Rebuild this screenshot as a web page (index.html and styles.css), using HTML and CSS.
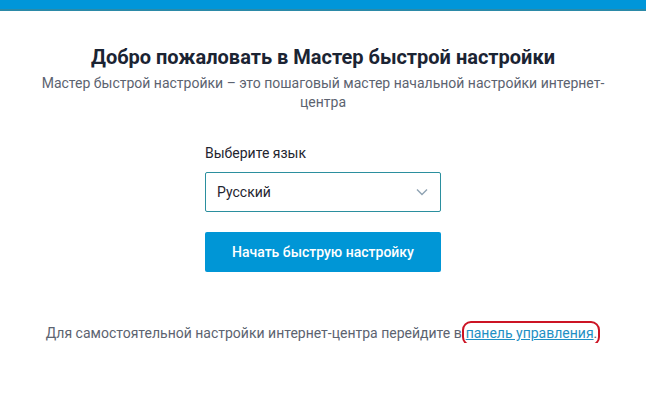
FILE: index.html
```html
<!DOCTYPE html>
<html lang="ru">
<head>
<meta charset="utf-8">
<title>Мастер быстрой настройки</title>
<link rel="stylesheet" href="styles.css">
</head>
<body>
<div class="topbar"></div>
<main class="wizard">
  <h1 class="title">Добро пожаловать в Мастер быстрой настройки</h1>
  <p class="subtitle">Мастер быстрой настройки – это пошаговый мастер начальной настройки интернет-центра</p>
  <div class="form">
    <label class="label">Выберите язык</label>
    <div class="select">
      <span>Русский</span>
      <svg class="chev" width="12" height="8" viewBox="0 0 12 8"><path d="M1 1.5 L6 6.5 L11 1.5" fill="none" stroke="#8fa3b3" stroke-width="1.4"/></svg>
    </div>
    <button class="start">Начать быструю настройку</button>
  </div>
  <p class="footer">Для самостоятельной настройки интернет-центра перейдите в<span class="mark"><a href="#" class="link">панель управления</a>.</span></p>
</main>
</body>
</html>
```
FILE: styles.css
```css
html, body {
  margin: 0;
  padding: 0;
  background: #fff;
  font-family: Roboto, "Noto Sans", sans-serif;
}
.topbar {
  height: 9px;
  background: #0096d9;
  border-bottom: 2px solid #2b8aa8;
}
.wizard {
  width: 580px;
  margin: 0 auto;
  display: flex;
  flex-direction: column;
  align-items: center;
  text-align: center;
}
.title {
  margin: 33px 0 0;
  font-size: 20px;
  line-height: 26px;
  font-weight: 700;
  color: #1b2433;
}
.subtitle {
  margin: 4px 0 0;
  font-size: 14px;
  line-height: 19px;
  color: #5c6370;
}
.form {
  width: 236px;
  margin-top: 32px;
  display: flex;
  flex-direction: column;
  text-align: left;
}
.label {
  font-size: 14px;
  line-height: 18px;
  color: #1f2530;
}
.select {
  margin-top: 10px;
  height: 38px;
  border: 1px solid #2b8f9e;
  border-radius: 2px;
  display: flex;
  align-items: center;
  justify-content: space-between;
  padding: 0 12px 0 11px;
  font-size: 14px;
  color: #1f2530;
}
.start {
  margin-top: 20px;
  height: 40px;
  border: none;
  border-radius: 2px;
  background: #0096d6;
  color: #fff;
  font-family: Roboto, sans-serif;
  font-size: 14px;
  font-weight: 500;
}
.footer {
  margin: 51px 0 0;
  font-size: 14px;
  line-height: 20px;
  color: #5c6370;
  white-space: nowrap;
}
.mark {
  border: 2.5px solid #cc1424;
  border-radius: 9px;
  padding: 2px 1px 3px 2px;
}
.link {
  color: #1e8fc4;
  text-decoration: underline;
  text-decoration-color: #1e8fc4;
}
```
